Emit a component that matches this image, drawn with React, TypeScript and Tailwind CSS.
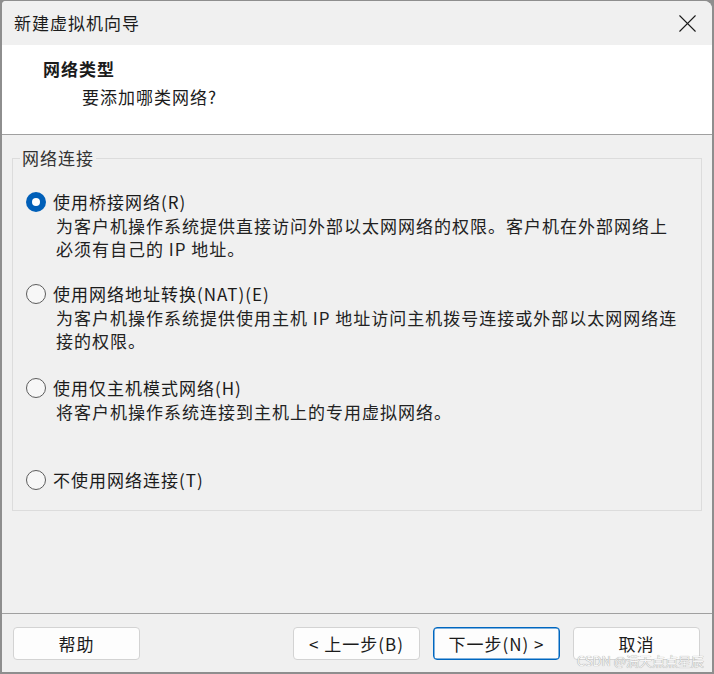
import { X } from "lucide-react";

const FONT = "[font-family:'Noto_Sans_CJK_SC','Noto_Sans',sans-serif]";

interface OptionProps {
  label: string;
  lines?: string[];
  checked?: boolean;
  className?: string;
}

function Radio({ checked }: { checked?: boolean }) {
  if (checked) {
    return (
      <span className="w-[20px] h-[20px] rounded-full bg-[#005fb8] flex items-center justify-center shrink-0">
        <span className="w-[8px] h-[8px] rounded-full bg-white" />
      </span>
    );
  }
  return <span className="w-[20px] h-[20px] rounded-full border border-[#5c5c5c] bg-[#f7f7f7] shrink-0" />;
}

function NetOption({ label, lines = [], checked, className = "" }: OptionProps) {
  return (
    <div className={className}>
      <div className="h-[24px] flex items-center gap-[7px] pl-[13px]">
        <Radio checked={checked} />
        <span className="text-[17px] leading-[24px] tracking-[1px]">{label}</span>
      </div>
      {lines.length > 0 && (
        <div className="pl-[43px] text-[17px] leading-[23px] tracking-[1px] text-[#222]">
          {lines.map((l) => (
            <div key={l} className="whitespace-nowrap">{l}</div>
          ))}
        </div>
      )}
    </div>
  );
}

function WizButton({ children, primary }: { children: React.ReactNode; primary?: boolean }) {
  return (
    <button
      type="button"
      className={
        "w-[127px] h-[33px] rounded-[4px] bg-[#fdfdfd] text-[17px] tracking-[1px] text-[#1b1b1b] flex items-center justify-center " +
        (primary ? "border border-[#0067c0] shadow-[inset_0_0_0_0.5px_#0067c0]" : "border border-[#d3d3d3]")
      }
    >
      {children}
    </button>
  );
}

export default function App() {
  return (
    <div className={`w-[714px] h-[674px] bg-[#8e8e8e] pt-[1px] pl-[2px] ${FONT}`}>
      <div className="relative w-[710px] h-[671px] bg-[#f0f0f0] rounded-tr-[8px] rounded-tl-[4px] flex flex-col overflow-hidden text-[#1b1b1b]">
        {/* Title bar */}
        <div className="h-[44px] flex items-center justify-between pl-[12px] pr-[9px] bg-[#f0f0f0]">
          <span className="text-[17px] tracking-[1px]">新建虚拟机向导</span>
          <X className="w-[31px] h-[31px] text-[#1b1b1b]" strokeWidth={0.85} />
        </div>

        {/* Header */}
        <div className="h-[90px] bg-white border-b border-[#a0a0a0] pl-[41px] pt-[12px]">
          <div className="text-[17px] leading-[24px] font-bold tracking-[1px]">网络类型</div>
          <div className="pl-[39px] mt-[4px] text-[17px] leading-[24px] tracking-[1px]">要添加哪类网络?</div>
        </div>

        {/* Body */}
        <div className="flex-1 px-[10px] pt-[11px]">
          <fieldset className="border border-[#dcdcdc] h-[365px] pb-[19px]">
            <legend className="ml-[7px] px-[2px] text-[17px] leading-[24px] tracking-[1px] text-[#333]">网络连接</legend>
            <NetOption
              className="mt-[20px]"
              checked
              label="使用桥接网络(R)"
              lines={["为客户机操作系统提供直接访问外部以太网网络的权限。客户机在外部网络上", "必须有自己的 IP 地址。"]}
            />
            <NetOption
              className="mt-[22px]"
              label="使用网络地址转换(NAT)(E)"
              lines={["为客户机操作系统提供使用主机 IP 地址访问主机拨号连接或外部以太网网络连", "接的权限。"]}
            />
            <NetOption
              className="mt-[24px]"
              label="使用仅主机模式网络(H)"
              lines={["将客户机操作系统连接到主机上的专用虚拟网络。"]}
            />
            <NetOption className="mt-[45px]" label="不使用网络连接(T)" />
          </fieldset>
        </div>

        {/* Footer */}
        <div className="border-t border-[#a0a0a0] pt-[13px] pb-[12px] pl-[11px] pr-[12px] flex items-center">
          <WizButton>帮助</WizButton>
          <div className="ml-auto flex gap-[13px]">
            <WizButton>&lt; 上一步(B)</WizButton>
            <WizButton primary>下一步(N) &gt;</WizButton>
            <WizButton>取消</WizButton>
          </div>
        </div>

        {/* watermark drawn over the cancel button */}
        <span className="absolute right-[8px] bottom-[3px] text-[13px] leading-[16px] text-[#f6f6f6] [text-shadow:0_0_1px_#9a9a9a,0_0_0.5px_#9a9a9a]">
          CSDN @满天点点星辰
        </span>
      </div>
    </div>
  );
}
